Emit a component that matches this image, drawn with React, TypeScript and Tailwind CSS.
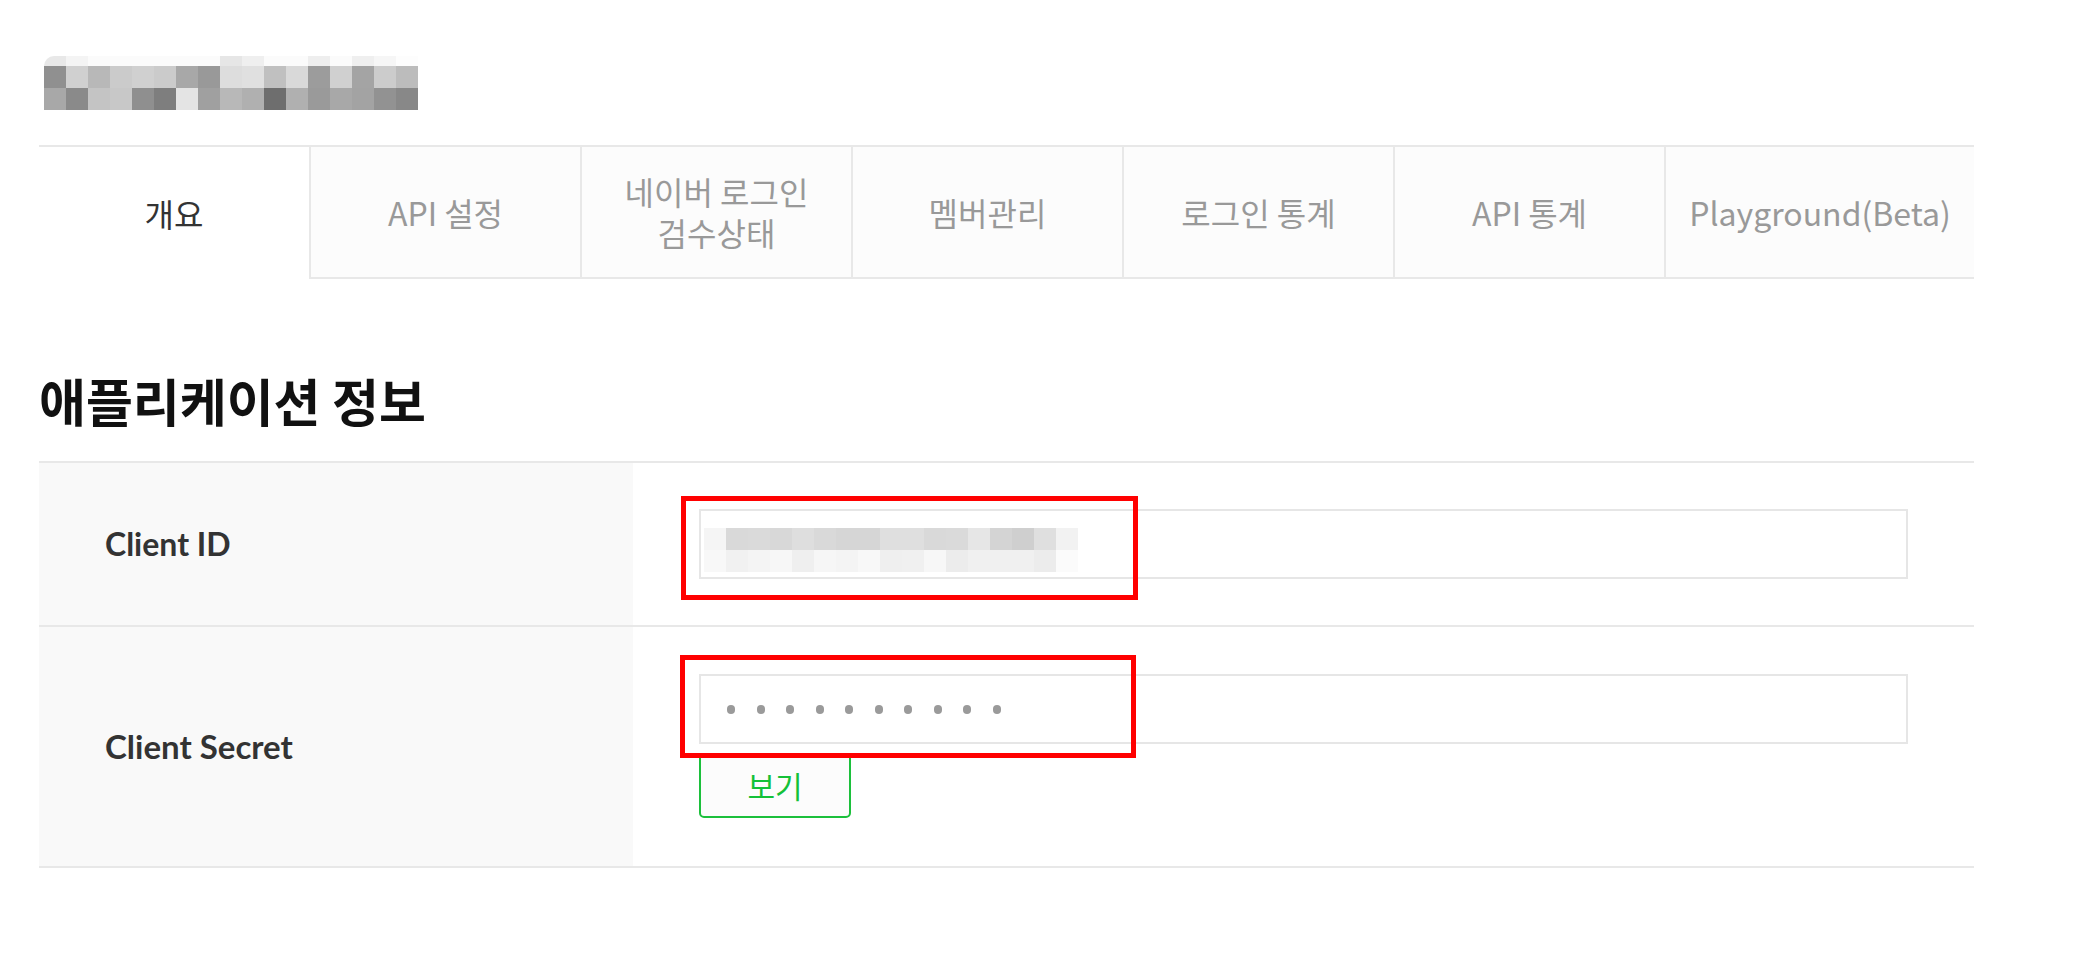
import React from 'react';

const logoFringe = ['#e8e8e8','#f4f4f4','#fbfbfb','#fbfbfb','#fbfbfb','#fbfbfb','#fbfbfb','#fbfbfb','#e6e6e6','#efefef','#fbfbfb','#fbfbfb','#eeeeee','#fbfbfb','#efefef','#f6f6f6','#fdfdfd'];
const logoTop = ['#909090','#d0d0d0','#b8b8b8','#cbcbcb','#d0d0d0','#cbcbcb','#a8a8a8','#999999','#dddddd','#e0e0e0','#c0c0c0','#d9d9d9','#9c9c9c','#d0d0d0','#a4a4a4','#cccccc','#bcbcbc'];
const logoBottom = ['#a8a8a8','#8a8a8a','#c4c4c4','#c8c8c8','#8f8f8f','#7e7e7e','#e4e4e4','#a0a0a0','#b8b8b8','#b0b0b0','#6e6e6e','#b0b0b0','#9a9a9a','#a8a8a8','#a3a3a3','#929292','#888888'];

const idTop = ['#f5f5f5','#d9d9d9','#dadada','#d8d8d8','#dedede','#d9d9d9','#d6d6d6','#d6d6d6','#dfdfdf','#dfdfdf','#d9d9d9','#dadada','#e6e6e6','#d4d4d4','#cfcfcf','#dfdfdf','#f2f2f2'];
const idBottom = ['#f8f8f8','#f1f1f1','#f4f4f4','#f7f7f7','#efefef','#f6f6f6','#f4f4f4','#f8f8f8','#efefef','#f0f0f0','#f7f7f7','#ececec','#f0f0f0','#f0f0f0','#f0f0f0','#ececec','#fbfbfb'];

function Pixels({ rows }: { rows: string[][] }) {
  return (
    <div className="flex flex-col">
      {rows.map((r, i) => (
        <div key={i} className="flex">
          {r.map((c, j) => (
            <div key={j} className="w-[22px] h-[22px]" style={{ backgroundColor: c }} />
          ))}
        </div>
      ))}
    </div>
  );
}

const tabs = [
  { label: 'API 설정' },
  { label: '네이버 로그인\n검수상태' },
  { label: '멤버관리' },
  { label: '로그인 통계' },
  { label: 'API 통계' },
];

export default function App() {
  return (
    <div className="min-h-screen w-full bg-white [font-family:'Noto_Sans_CJK_KR','Noto_Sans',sans-serif]">
      <div className="ml-[39px] w-[1935px]">
        {/* blurred logo */}
        <div className="pt-[56px] h-[113px] pl-[5px]">
          <div className="flex flex-col overflow-hidden rounded-br-[8px] rounded-tl-[10px]">
            <div className="flex h-[10px]">
              {logoFringe.map((c, j) => (
                <div key={j} className="w-[22px] h-[10px]" style={{ backgroundColor: c }} />
              ))}
            </div>
            <Pixels rows={[logoTop, logoBottom]} />
          </div>
        </div>

        {/* tabs */}
        <div className="mt-[32px] flex h-[134px] border-t-2 border-[#e8e8e8] text-[32px] leading-[41px]">
          <div className="flex w-[270px] items-center justify-center bg-white text-[#333]">개요</div>
          {tabs.map((t) => (
            <div
              key={t.label}
              className="flex w-[271px] items-center justify-center whitespace-pre-line border-b-2 border-l-2 border-[#e8e8e8] bg-[#fcfcfc] text-center text-[#999]"
            >
              {t.label}
            </div>
          ))}
          <div className="flex flex-1 items-center justify-center border-b-2 border-l-2 border-[#e8e8e8] bg-[#fcfcfc] text-[#999]">
            Playground(Beta)
          </div>
        </div>

        {/* title */}
        <h1 className="mt-[96px] h-[50px] text-[51px] font-bold leading-[50px] text-[#111]">애플리케이션 정보</h1>

        {/* table */}
        <div className="mt-[36px] border-t-2 border-[#e8e8e8]">
          <div className="flex border-b-2 border-[#e8e8e8]">
            <div className="flex w-[594px] items-center bg-[#f9f9f9] pl-[66px] text-[32px] font-bold text-[#333] [font-family:Lato,'Noto_Sans',sans-serif]">
              Client ID
            </div>
            <div className="flex-1 px-[66px] py-[46px]">
              <div className="relative h-[70px] border-2 border-[#e6e6e6] bg-white">
                <div className="absolute left-[3px] top-[17px] rounded-[10px] bg-[#fafafa] p-0">
                  <Pixels rows={[idTop, idBottom]} />
                </div>
                <div className="pointer-events-none absolute -left-[20px] -top-[15px] h-[104px] w-[457px] border-[5px] border-[#ff0000]" />
              </div>
            </div>
          </div>
          <div className="flex border-b-2 border-[#e8e8e8]">
            <div className="flex w-[594px] items-center bg-[#f9f9f9] pl-[66px] text-[33px] font-bold text-[#333] [font-family:Lato,'Noto_Sans',sans-serif]">
              Client Secret
            </div>
            <div className="flex-1 px-[66px] pb-[48px] pt-[47px]">
              <div className="relative flex h-[70px] items-center gap-[21.5px] border-2 border-[#e6e6e6] bg-white pl-[26px]">
                {Array.from({ length: 10 }).map((_, i) => (
                  <div key={i} className="h-[9px] w-[8px] rounded-full bg-[#9a9a9a]" />
                ))}
                <div className="pointer-events-none absolute -left-[21px] -top-[21px] z-10 h-[103px] w-[456px] border-[5px] border-[#ff0000]" />
              </div>
              <button className="mt-[9px] flex h-[65px] w-[152px] items-center justify-center rounded-[5px] border-2 border-[#1cc03c] bg-[#fcfcfc] text-[30px] text-[#14c138]">
                보기
              </button>
            </div>
          </div>
        </div>
      </div>
    </div>
  );
}
